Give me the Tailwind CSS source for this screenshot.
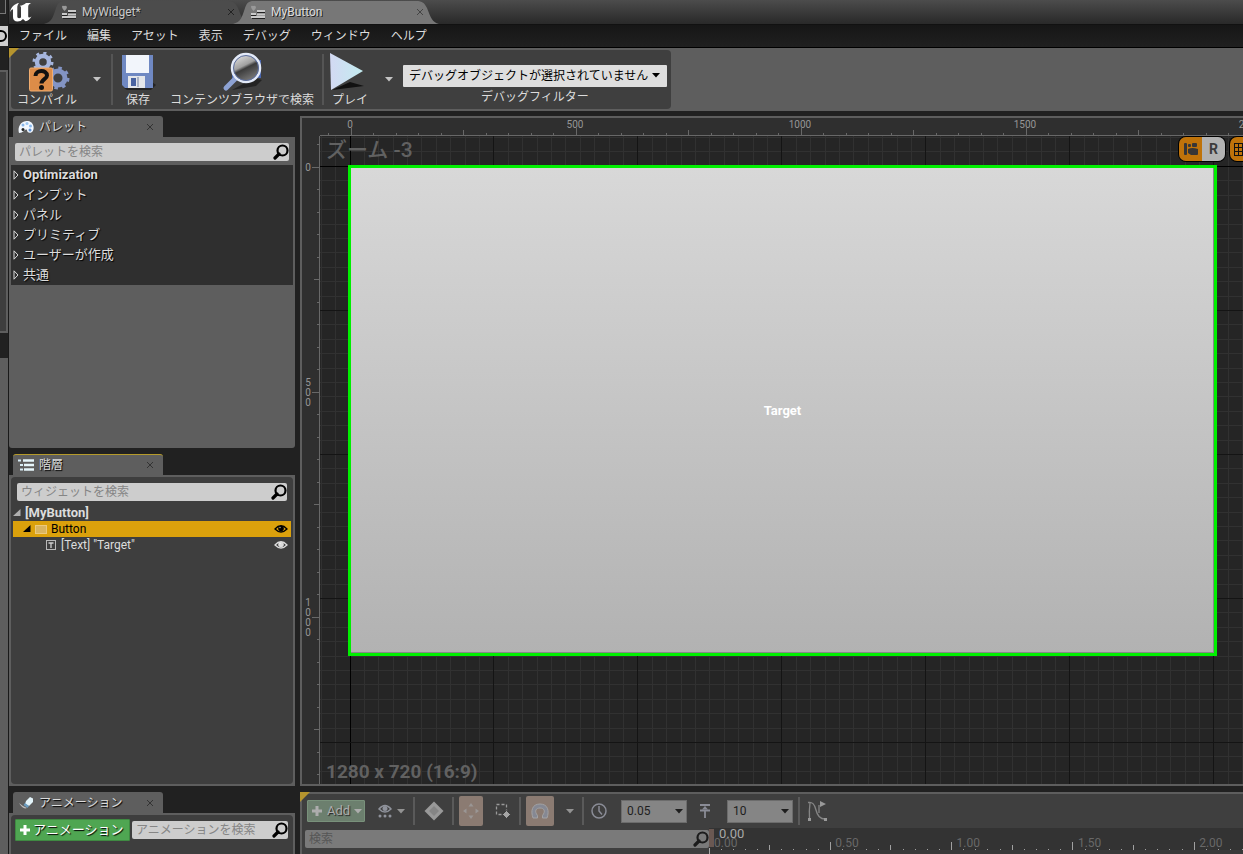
<!DOCTYPE html>
<html lang="ja">
<head>
    <meta charset="UTF-8">
    <meta name="viewport" content="width=device-width, initial-scale=1.0">
    <title>MyButton</title>
    <script src="https://cdn.jsdelivr.net/npm/@tailwindcss/browser@4"></script>
</head>
<body class="flex h-screen overflow-hidden bg-[#212121] font-['Roboto','Noto_Sans_CJK_JP',sans-serif] text-xs text-[#dcdcdc]">
    <svg class="hidden">
        <symbol id="search" viewBox="0 0 16 16">
            <circle cx="9.5" cy="6.5" r="5" fill="none" stroke="currentColor" stroke-width="2.2"/>
            <path d="M6 10 L2 14" stroke="currentColor" stroke-width="3.2" stroke-linecap="round"/>
        </symbol>
        <symbol id="close" viewBox="0 0 8 8">
            <path d="M1 1 L7 7 M7 1 L1 7" stroke="currentColor" stroke-width="1"/>
        </symbol>
        <symbol id="down" viewBox="0 0 8 5">
            <path d="M0 0 H8 L4 4.5 Z" fill="currentColor"/>
        </symbol>
        <symbol id="plus" viewBox="0 0 12 12">
            <path d="M4.5 1 h3 v3.5 h3.5 v3 h-3.5 v3.5 h-3 v-3.5 h-3.5 v-3 h3.5 Z" fill="currentColor"/>
        </symbol>
        <symbol id="eye" viewBox="0 0 14 10">
            <path d="M1 5 Q7 -1.5 13 5 Q7 11 1 5 Z" fill="none" stroke="currentColor" stroke-width="1.3"/>
            <circle cx="7" cy="4.5" r="2.8" fill="currentColor"/>
            <circle cx="6" cy="3.5" r=".8" fill="#fff" opacity=".6"/>
        </symbol>
        <symbol id="closed" viewBox="0 0 6 10">
            <path d="M1 .8 L5 5 L1 9.2 Z" fill="none" stroke="currentColor"/>
        </symbol>
        <symbol id="opened" viewBox="0 0 8 8">
            <path d="M7.5 0 V7 H0 Z" fill="currentColor"/>
        </symbol>
        <symbol id="widget" viewBox="0 0 16 14">
            <path d="M1 2 Q1 0 3 1 Q5 0 6 2 Q6 4 3.5 6 Q1.5 4.500 1 2 Z" fill="#999"/>
            <path d="M7 7.5 h8 M1 10.5 h5 M2 13.5 h13" stroke="#222"/>
            <path d="M7 6 h8 M1 9 h5 M7 9.500 h8 M1 12 h14" stroke="#c9c9c9" stroke-width="1.8"/>
        </symbol>
        <symbol id="tab" viewBox="0 0 206 24">
            <path d="M0 24 C8 22 9 17 12 8 C14 3 15 1 21 1 H183 C190 1 191 3 194 8 C198 18 199 22 206 24 Z" fill="currentColor"/>
        </symbol>
    </svg>

    <!-- Edge of the window behind -->
    <div class="flex w-[9px] shrink-0 flex-col border-r border-[#1a1a1a]">
        <div class="mb-3 h-[14px] w-1.5 border-r border-b border-[#777] bg-[#2a2a2a]"></div>
        <div class="h-5 overflow-hidden bg-[#cfcfcf]">
            <div class="mt-1 -ml-[5px] size-3 rounded-full border-2 border-black"></div>
        </div>
        <div class="mt-6 h-[263px] border-t-2 border-r-2 border-b-2 border-[#5e5e5e] bg-[#3e3e3e]"></div>
        <div class="mt-[25px] grow bg-[#5e5e5e]"></div>
    </div>

    <div class="flex min-w-0 grow flex-col">
        <!-- Title bar -->
        <header class="flex h-[25px] shrink-0 items-end border-b border-[#111] bg-linear-to-b from-[#4c4c4c] to-[#292929]">
            <div class="w-[35px] shrink-0 self-start">
                <svg class="h-[23px] w-6" viewBox="0 0 24 23">
                    <path d="M1 12 C2 7 6 3.5 10 3 C8.5 5 8.3 6 8.3 7.5 V16.5 C8.3 18 10 18.8 12 17.5 V7.5 C12 6.5 11.5 6 10.7 5.7 C13.5 5.6 15.5 4.5 17 3 H22 C19.8 4.3 19.2 5 19.2 7 V16 C19.2 17.8 20.3 18 22.5 16.5 C21 19.3 19 20.8 16.5 21.3 L14 19 C12.5 20.7 10.7 21.5 8.5 21.5 C5.7 21.5 4 19.8 4 17 V10 C4 8.3 2.5 9.3 1 12 Z" fill="#fff"/>
                </svg>
            </div>
            <div class="relative flex h-6 w-[206px] shrink-0 items-center pr-[15px] pl-[17px] text-[#4c4c4c]">
                <svg class="absolute inset-0 h-6 w-[206px]"><use href="#tab"/></svg>
                <svg class="relative h-[14px] w-4"><use href="#widget"/></svg>
                <span class="relative ml-[5px] grow text-[#c8c8c8] [text-shadow:1px_1px_0_#222]">MyWidget*</span>
                <button aria-label="閉じる" class="relative text-[#222]"><svg class="size-2"><use href="#close"/></svg></button>
            </div>
            <div class="relative -ml-[17px] flex h-6 w-[206px] shrink-0 items-center pr-[15px] pl-[17px] text-[#777]">
                <svg class="absolute inset-0 h-6 w-[206px]"><use href="#tab"/></svg>
                <svg class="relative h-[14px] w-4"><use href="#widget"/></svg>
                <span class="relative ml-[5px] grow text-[#dcdcdc] [text-shadow:1px_1px_0_#222]">MyButton</span>
                <button aria-label="閉じる" class="relative text-[#444]"><svg class="size-2"><use href="#close"/></svg></button>
            </div>
        </header>

        <!-- Menu -->
        <nav class="flex h-[23px] shrink-0 items-center gap-5 border-b border-black bg-linear-to-b from-[#161616] to-[#202020] px-2.5">
            <a href="#">ファイル</a>
            <a href="#">編集</a>
            <a href="#">アセット</a>
            <a href="#">表示</a>
            <a href="#">デバッグ</a>
            <a href="#">ウィンドウ</a>
            <a href="#">ヘルプ</a>
        </nav>

        <!-- Toolbar -->
        <div class="relative flex h-[63px] shrink-0 bg-[#5e5e5e] p-0.5">
            <svg class="absolute top-0 left-0 z-10 size-2.5" viewBox="0 0 10 10"><path d="M0 0 H10 L0 10 Z" fill="#b5942e"/></svg>
            <div class="flex items-stretch rounded-[4px] bg-[#3f3f3f] pr-1 text-center [text-shadow:1px_1px_1px_#000]">
                <button class="flex w-[72px] flex-col items-center">
                    <svg class="mt-0.5 h-10 w-12 shrink-0" viewBox="0 0 48 40">
                        <circle cx="20" cy="10" r="6" fill="none" stroke="#a5b5dd" stroke-width="4.5"/>
                        <circle cx="20" cy="10" r="9" fill="none" stroke="#a5b5dd" stroke-width="3" stroke-dasharray="3 4.07"/>
                        <circle cx="35" cy="26" r="7" fill="none" stroke="#8394c4" stroke-width="5"/>
                        <circle cx="35" cy="26" r="10" fill="none" stroke="#8394c4" stroke-width="3" stroke-dasharray="3.5 4.354"/>
                        <rect x="6.500" y="16" width="23" height="23" rx="1.5" fill="#dc8c48" stroke="#f0ad70"/>
                        <path d="M12.500 24 C12.500 17.5 24 17.5 24 23.5 C24 27 18.500 27.5 18.500 31.5" fill="none" stroke="#111" stroke-width="4"/>
                        <circle cx="18.5" cy="35.5" r="2.5" fill="#111"/>
                    </svg>
                    <span class="leading-4">コンパイル</span>
                </button>
                <button aria-label="コンパイルのオプション" class="w-7 pl-2.5 text-[#c4c4c4]"><svg class="h-[5px] w-2"><use href="#down"/></svg></button>
                <div class="my-1 mr-px w-0.5 bg-[#555]"></div>
                <button class="flex w-12 flex-col items-center">
                    <svg class="mt-0.5 h-10 w-12 shrink-0" viewBox="0 0 48 40">
                        <path d="M10 36 L38 30 L42 33 L37 38 H13 Z" fill="#111" opacity=".6"/>
                        <path d="M8 3 H39 V36 H11 L8 33 Z" fill="#6f88c2"/>
                        <rect x="12" y="3" width="23" height="18" fill="#f2f5fb"/>
                        <rect x="14" y="24" width="17" height="12" fill="#e4e6ea"/>
                        <rect x="17" y="26" width="5" height="8" fill="#4a63a0"/>
                        <path d="M23 25 h2 v10 h-2 Z" fill="#aab2c4"/>
                    </svg>
                    <span class="leading-4">保存</span>
                </button>
                <button class="flex w-40 flex-col items-center">
                    <svg class="mt-0.5 h-10 w-12 shrink-0" viewBox="0 0 48 40">
                        <defs>
                            <linearGradient id="lens" x1="0" y1="0" x2=".5" y2="1">
                                <stop offset="0" stop-color="#f4f4f4"/>
                                <stop offset=".5" stop-color="#a0a0a0"/>
                                <stop offset=".6" stop-color="#3c3c3c"/>
                                <stop offset="1" stop-color="#777"/>
                            </linearGradient>
                        </defs>
                        <path d="M14 38 L36 26 L44 28 L38 34 Z" fill="#111" opacity=".6"/>
                        <path d="M14 9 h6 v18 h-6 Z M39 8 h4 v18 h-4 Z" fill="#4965ad"/>
                        <path d="M18 26 L8 36" stroke="#8da2d3" stroke-width="5" stroke-linecap="round"/>
                        <circle cx="28" cy="16" r="14" fill="url(#lens)" stroke="#e3eaf8" stroke-width="2.5"/>
                        <circle cx="28" cy="16" r="12.5" fill="none" stroke="#5b6ea0"/>
                    </svg>
                    <span class="leading-4">コンテンツブラウザで検索</span>
                </button>
                <div class="my-1 mr-px w-0.5 bg-[#555]"></div>
                <button class="flex w-[50px] flex-col items-center">
                    <svg class="mt-0.5 h-10 w-12 shrink-0" viewBox="0 0 48 40">
                        <defs>
                            <linearGradient id="play" x1="0" y1="0" x2="1" y2="0">
                                <stop offset="0" stop-color="#d3d9f3"/>
                                <stop offset="1" stop-color="#c3ecf0"/>
                            </linearGradient>
                        </defs>
                        <path d="M6 38 L24 30 L38 34 Z" fill="#111"/>
                        <path d="M4 1 L37 19 L5 38 Z" fill="url(#play)"/>
                    </svg>
                    <span class="leading-4">プレイ</span>
                </button>
                <button aria-label="プレイのオプション" class="w-7 pl-2.5 text-[#c4c4c4]"><svg class="h-[5px] w-2"><use href="#down"/></svg></button>
                <div class="flex w-[264px] flex-col pt-[15px] [text-shadow:none]">
                    <div class="relative">
                        <select aria-label="デバッグフィルター" class="block h-[22px] w-full appearance-none rounded-[1px] bg-[#dedede] pl-1.5 text-black">
                            <option>デバッグオブジェクトが選択されていません</option>
                        </select>
                        <svg class="pointer-events-none absolute top-2 right-[7px] h-[5px] w-2 text-black"><use href="#down"/></svg>
                    </div>
                    <span class="leading-5">デバッグフィルター</span>
                </div>
            </div>
        </div>

        <div class="flex min-h-0 grow gap-[5px] pt-[5px]">
            <!-- Left column -->
            <div class="flex w-[286px] shrink-0 flex-col gap-1.5">
                <section class="flex min-h-0 flex-1 flex-col">
                    <div class="ml-1 flex h-[21px] w-[150px] shrink-0 items-center rounded-t-[3px] bg-[#5e5e5e] px-[5px]">
                        <svg class="h-[14px] w-4" viewBox="0 0 16 14">
                            <path d="M1 13 C-1 6 4 0 10 1 C16 2 17 9 14 12 C11 14 9 12 9 10 C7 8 6 13 1 13 Z" fill="#f2f8ff"/>
                            <circle cx="5" cy="5" r="1.5" fill="#8ab8ec"/><circle cx="9" cy="3.5" r="1.5" fill="#9cc6f2"/><circle cx="12.5" cy="6" r="1.5" fill="#8ab8ec"/><circle cx="12" cy="10" r="1.5" fill="#5f93d6"/><circle cx="5" cy="9.5" r="1.5" fill="#222"/>
                        </svg>
                        <h2 class="ml-[5px] grow [text-shadow:1px_1px_1px_#000]">パレット</h2>
                        <button aria-label="閉じる" class="mr-1 text-[#333]"><svg class="size-2"><use href="#close"/></svg></button>
                    </div>
                    <div class="grow rounded-b-[3px] bg-[#5e5e5e] px-0.5 pt-1.5">
                        <div class="relative mr-1 ml-1">
                            <input type="search" aria-label="パレットを検索" placeholder="パレットを検索" class="block h-[18px] w-full rounded-[2px] bg-[#cdcdcd] px-1 text-black placeholder:text-[#858585]">
                            <svg class="absolute top-px right-0 size-4 text-black"><use href="#search"/></svg>
                        </div>
                        <ul class="mt-1 bg-[#2f2f2f] text-[13px] leading-5 [text-shadow:1px_1px_1px_#000]">
                            <li class="flex items-center gap-1 pl-0.5"><svg class="h-2.5 w-1.5"><use href="#closed"/></svg><b>Optimization</b></li>
                            <li class="flex items-center gap-1 pl-0.5"><svg class="h-2.5 w-1.5"><use href="#closed"/></svg>インプット</li>
                            <li class="flex items-center gap-1 pl-0.5"><svg class="h-2.5 w-1.5"><use href="#closed"/></svg>パネル</li>
                            <li class="flex items-center gap-1 pl-0.5"><svg class="h-2.5 w-1.5"><use href="#closed"/></svg>プリミティブ</li>
                            <li class="flex items-center gap-1 pl-0.5"><svg class="h-2.5 w-1.5"><use href="#closed"/></svg>ユーザーが作成</li>
                            <li class="flex items-center gap-1 pl-0.5"><svg class="h-2.5 w-1.5"><use href="#closed"/></svg>共通</li>
                        </ul>
                    </div>
                </section>

                <section class="flex min-h-0 flex-1 flex-col">
                    <div class="ml-1 flex h-[21px] w-[150px] shrink-0 items-center rounded-t-[3px] border-t border-[#b59a2a] bg-[#5e5e5e] px-[5px]">
                        <svg class="h-3 w-4" viewBox="0 0 16 12">
                            <path d="M0 1.5 h3 M2 6 h3 M2 10.5 h3" stroke="#d7ecf5" stroke-width="2"/>
                            <path d="M5 1.5 h11 M6 6 h10 M6 10.5 h10" stroke="#e6f6fb" stroke-width="2.6"/>
                        </svg>
                        <h2 class="ml-[5px] grow [text-shadow:1px_1px_1px_#000]">階層</h2>
                        <button aria-label="閉じる" class="mr-1 text-[#333]"><svg class="size-2"><use href="#close"/></svg></button>
                    </div>
                    <div class="flex grow flex-col bg-[#5e5e5e] p-0.5">
                        <div class="grow rounded-[4px] bg-[#3e3e3e] px-0.5 pt-1.5">
                            <div class="relative mx-1">
                                <input type="search" aria-label="ウィジェットを検索" placeholder="ウィジェットを検索" class="block h-[18px] w-full rounded-[2px] bg-[#cdcdcd] px-1 text-black placeholder:text-[#858585]">
                                <svg class="absolute top-px right-0 size-4 text-black"><use href="#search"/></svg>
                            </div>
                            <ul class="mt-1 leading-4">
                                <li class="flex items-center gap-1"><svg class="size-2 text-[#b0b0b0]"><use href="#opened"/></svg><b class="text-[13px]">[MyButton]</b></li>
                                <li class="flex items-center gap-1 bg-[#dba10c] pr-[3px] pl-2.5 text-black">
                                    <svg class="size-2"><use href="#opened"/></svg>
                                    <svg class="h-[9px] w-3" viewBox="0 0 12 9"><rect x=".5" y=".5" width="11" height="8" fill="#d8b562" stroke="#ecca7c"/></svg>
                                    <span class="grow">Button</span>
                                    <svg class="h-2.5 w-[14px]"><use href="#eye"/></svg>
                                </li>
                                <li class="flex items-center gap-1 pr-[3px] pl-8">
                                    <svg class="size-3" viewBox="0 0 12 12"><rect x="1.5" y="1.5" width="9" height="9" fill="none" stroke="#b8b8b8"/><path d="M3.5 4 h5 M6 4 v5" stroke="#d0d0d0" stroke-width="1.3"/></svg>
                                    <span class="grow">[Text] "Target"</span>
                                    <svg class="h-2.5 w-[14px]"><use href="#eye"/></svg>
                                </li>
                            </ul>
                        </div>
                    </div>
                </section>

                <section class="flex h-[62px] shrink-0 flex-col">
                    <div class="ml-1 flex h-[21px] w-[150px] shrink-0 items-center rounded-t-[3px] bg-[#5e5e5e] px-[5px]">
                        <svg class="h-[14px] w-4" viewBox="0 0 16 14">
                            <path d="M8 5 L12 1 L15 2.5 V6 L11 10 L7 8 Z" fill="#e3f4fa"/>
                            <path d="M7 7 L11 10 L9.5 12 L5.5 9 Z" fill="#6a9cc0"/>
                            <path d="M1 7 L5 10 L9 12 Q5 14 1 7 Z" fill="#bbb"/>
                        </svg>
                        <h2 class="ml-[5px] grow [text-shadow:1px_1px_1px_#000]">アニメーション</h2>
                        <button aria-label="閉じる" class="mr-1 text-[#333]"><svg class="size-2"><use href="#close"/></svg></button>
                    </div>
                    <div class="flex grow bg-[#5e5e5e] px-0.5 pt-0.5">
                        <div class="flex grow items-start gap-0.5 rounded-t-[4px] bg-[#3e3e3e] pt-1 pr-[5px] pl-1">
                            <button class="flex h-[22px] w-[115px] shrink-0 items-center gap-0.5 rounded-[1px] border border-[#3f8a42] bg-[#4fa652] px-[3px] text-[13px] whitespace-nowrap text-white [text-shadow:1px_1px_1px_#000]"><svg class="size-3 shrink-0"><use href="#plus"/></svg>アニメーション</button>
                            <div class="relative mt-0.5 grow">
                                <input type="search" aria-label="アニメーションを検索" placeholder="アニメーションを検索" class="block h-[18px] w-full rounded-[2px] bg-[#cdcdcd] px-1 text-black placeholder:text-[#858585]">
                                <svg class="absolute top-px right-0 size-4 text-black"><use href="#search"/></svg>
                            </div>
                        </div>
                    </div>
                </section>
            </div>

            <!-- Right column -->
            <div class="flex min-w-0 grow flex-col gap-1.5">
                <!-- Designer -->
                <main class="relative grid min-h-0 grow grid-cols-[18px_1fr] grid-rows-[18px_1fr] overflow-hidden border-y-2 border-l-2 border-[#5e5e5e] bg-[#2f2f2f]">
                    <svg class="absolute -top-0.5 -left-0.5 z-10 size-2.5" viewBox="0 0 10 10"><path d="M0 0 H10 L8 2 H2 V8 L0 10 Z" fill="#b5942e"/></svg>
                    <svg id="rulerX" class="col-start-2 h-[18px] w-full" shape-rendering="crispEdges"></svg>
                    <svg id="rulerY" class="col-start-1 h-full w-[18px]" shape-rendering="crispEdges"></svg>
                    <div class="relative overflow-hidden bg-[#252525]">
                        <svg id="grid" class="absolute inset-0 h-full w-full" shape-rendering="crispEdges"></svg>
                        <div class="absolute top-[29px] left-7 flex h-[491px] w-[869px] items-center justify-center border-[3px] border-[#00f000] bg-linear-to-b from-[#d8d8d8] to-[#b2b2b2] text-[13px] font-bold text-white [box-shadow:inset_-1px_-1px_0_#888]">Target</div>
                        <div class="absolute top-0 left-1.5 text-[21px] leading-7 font-medium text-[#616161]">ズーム -3</div>
                        <div class="absolute bottom-0 left-1.5 text-[19px] leading-6 font-bold text-[#616161]">1280 x 720 (16:9)</div>
                        <div class="absolute top-px -right-[23px] flex gap-[5px]">
                            <div class="flex h-6 w-[46px] overflow-hidden rounded-[7px] ring-1 ring-black">
                                <button aria-label="アウトライン" class="flex w-[23px] items-center justify-center bg-[#bf730a]">
                                    <svg class="h-[14px] w-4" viewBox="0 0 16 14" fill="#363636"><rect x="1" y="1" width="3" height="12" rx="1"/><rect x="5" y="2" width="3" height="3" rx="1"/><rect x="9" y="1" width="5" height="4" rx="1"/><path d="M5 7 q4 -2 10 0 v5 q0 1 -1 1 h-6 l-3 -2 Z"/></svg>
                                </button>
                                <button class="grow bg-[#b2b2b2] text-sm font-bold text-[#3c3c3c]">R</button>
                            </div>
                            <button aria-label="グリッドスナップ" class="flex h-6 w-9 items-center rounded-[7px] bg-[#bf730a] pl-1 ring-1 ring-black">
                                <svg class="size-[13px]" viewBox="0 0 13 13"><path d="M.5 0 V13 M4.5 0 V13 M8.5 0 V13 M12.5 0 V13 M0 .5 H13 M0 4.5 H13 M0 8.5 H13 M0 12.5 H13" stroke="#111"/></svg>
                            </button>
                        </div>
                    </div>
                </main>

                <!-- Sequencer -->
                <section class="relative flex h-[62px] shrink-0 flex-col border-t-2 border-l-2 border-[#5e5e5e] bg-[#3f3f3f] text-[#939393]">
                    <svg class="absolute -top-0.5 -left-0.5 size-2.5" viewBox="0 0 10 10"><path d="M0 0 H10 L0 10 Z" fill="#b5942e"/></svg>
                    <div class="flex h-[34px] shrink-0 items-center pl-[5px]">
                        <button class="flex h-[22px] w-[58px] items-center gap-1 rounded-[1px] border border-[#79917b] bg-[#6c7f6e] px-[3px] text-[13px] text-[#adadad] [text-shadow:1px_1px_1px_#222]"><svg class="size-3 shrink-0"><use href="#plus"/></svg>Add<svg class="h-[5px] w-2 shrink-0"><use href="#down"/></svg></button>
                        <button aria-label="表示オプション" class="ml-3 flex items-center gap-1">
                            <svg class="h-[14px] w-4" viewBox="0 0 16 14"><path d="M2 5 Q8 -2 14 5 Q8 11 2 5 Z" fill="none" stroke="#8f929b" stroke-width="1.5"/><circle cx="8" cy="4.5" r="2.5" fill="#8f929b"/><g fill="#8f929b"><circle cx="3" cy="12" r="1.5"/><circle cx="8" cy="12" r="1.5"/><circle cx="13" cy="12" r="1.5"/></g></svg>
                            <svg class="h-[5px] w-2"><use href="#down"/></svg>
                        </button>
                        <div class="mr-[9px] ml-2 h-7 w-0.5 bg-[#5a5a5a]"></div>
                        <button aria-label="キー" class="size-5"><svg class="size-5" viewBox="0 0 20 20"><path d="M10 0.5 L19.5 10 L10 19.5 L.5 10 Z" fill="#999"/><path d="M10 5 L15 10 L10 15 L5 10 Z" fill="#858585"/></svg></button>
                        <div class="mr-[5px] ml-2 h-7 w-0.5 bg-[#5a5a5a]"></div>
                        <button aria-label="自動キー" class="flex h-[30px] w-6 items-center justify-center rounded-[2px] bg-[#8b7b72]"><svg class="size-4" viewBox="0 0 16 16" fill="#9a9694"><path d="M8 0 L10.5 3.5 H5.5 Z M8 16 L10.5 12.5 H5.5 Z M0 8 L3.5 5.5 V10.5 Z M16 8 L12.5 5.5 V10.5 Z"/></svg></button>
                        <button aria-label="トラックキー" class="ml-3"><svg class="block size-4" viewBox="0 0 16 16"><path d="M1.5 1.5 H11.5 V11.5 H1.5 Z" fill="none" stroke="#999" stroke-width="1.3" stroke-dasharray="3 2"/><path d="M11.5 7.5 L15.5 11.5 L11.5 15.5 L7.5 11.5 Z" fill="#a5a5a5" stroke="#3f3f3f"/></svg></button>
                        <div class="mr-[5px] ml-2 h-7 w-0.5 bg-[#5a5a5a]"></div>
                        <button aria-label="スナップ" class="flex h-[30px] w-7 items-center justify-center rounded-[2px] bg-[#8b7b72]"><svg class="size-5" viewBox="0 0 20 20"><path d="M3 17 C.5 10 2 3 10 3 C18 3 19.5 10 17 17 H12.5 V14.5 C16 10 14 7 10 7 C6 7 4 10 7.5 14.5 V17 Z" fill="#858893" stroke="#a2a2a4"/></svg></button>
                        <button aria-label="スナップのオプション" class="ml-3"><svg class="h-[5px] w-2"><use href="#down"/></svg></button>
                        <div class="mr-[7px] ml-2 h-7 w-0.5 bg-[#5a5a5a]"></div>
                        <svg class="size-4" viewBox="0 0 16 16"><circle cx="8" cy="8" r="7" fill="none" stroke="#8a8c96" stroke-width="1.5"/><path d="M8 3 V8 L11 11.5" fill="none" stroke="#8a8c96" stroke-width="1.5"/></svg>
                        <div class="relative ml-3.5">
                            <select aria-label="時間間隔" class="block h-[23px] w-[66px] appearance-none border border-[#6c6c6c] bg-[#858585] pl-[5px] text-xs text-[#1e1e1e]"><option>0.05</option></select>
                            <svg class="pointer-events-none absolute top-[9px] right-1 h-[5px] w-2 text-[#1e1e1e]"><use href="#down"/></svg>
                        </div>
                        <svg class="ml-2.5 h-4 w-4" viewBox="0 0 16 16"><path d="M3 2 H13 M3 7.5 H13 M8 7 V15" stroke="#8a8c96" stroke-width="1.8"/><path d="M8 3 L11 6.5 H5 Z" fill="#8a8c96"/></svg>
                        <div class="relative ml-3.5">
                            <select aria-label="値の間隔" class="block h-[23px] w-[66px] appearance-none border border-[#6c6c6c] bg-[#858585] pl-[5px] text-xs text-[#1e1e1e]"><option>10</option></select>
                            <svg class="pointer-events-none absolute top-[9px] right-1 h-[5px] w-2 text-[#1e1e1e]"><use href="#down"/></svg>
                        </div>
                        <div class="mr-[7px] ml-[5px] h-7 w-0.5 bg-[#5a5a5a]"></div>
                        <button aria-label="カーブエディタ"><svg class="block h-5 w-5" viewBox="0 0 20 20"><path d="M1 1.5 Q7 0 9 9 Q11 18 18 18 M2.5 18 Q2 9 3 2 M12 4 V12" fill="none" stroke="#858585" stroke-width="1.3"/><path d="M13 0 L19 3 L13 6 Z M1 17 h3 v3 h-3 Z M17 17 h3 v3 h-3 Z" fill="#999"/></svg></button>
                    </div>
                    <div class="flex grow">
                        <div class="relative w-[407px] shrink-0 pt-0.5 pl-[3px]">
                            <input type="search" aria-label="検索" placeholder="検索" class="block h-[18px] w-full rounded-[2px] bg-[#7a7a7a] px-1 text-black placeholder:text-[#565656]">
                            <svg class="absolute top-[3px] right-0 size-4 text-[#1c1c1c]"><use href="#search"/></svg>
                        </div>
                        <div class="relative min-w-0 grow overflow-hidden">
                            <svg id="timeline" class="absolute inset-0 h-full w-full" shape-rendering="crispEdges"></svg>
                        </div>
                    </div>
                </section>
            </div>
        </div>
    </div>

    <script>
        const NS = 'http://www.w3.org/2000/svg';

        function line(svg, x, y, w, h, fill) {
            const r = document.createElementNS(NS, 'rect');
            r.setAttribute('x', Math.floor(x));
            r.setAttribute('y', Math.floor(y));
            r.setAttribute('width', w);
            r.setAttribute('height', h);
            r.setAttribute('fill', fill);
            svg.appendChild(r);
        }

        function label(svg, x, y, text, size, fill, anchor) {
            const t = document.createElementNS(NS, 'text');
            t.setAttribute('x', x);
            t.setAttribute('y', y);
            t.setAttribute('font-size', size);
            t.setAttribute('fill', fill);
            t.setAttribute('text-anchor', anchor);
            t.textContent = text;
            svg.appendChild(t);
        }

        // Designer grid, ten cells per major line
        const grid = document.getElementById('grid');
        for (const major of [false, true]) {
            for (let i = -2; i < 200; i++) {
                if ((i % 10 === 0) !== major) continue;
                const color = i === 0 ? '#000' : major ? '#141414' : '#313131';
                line(grid, i === 0 ? 30 : 29.95 + i * 14.4, 0, 1, 4000, color);
                line(grid, 0, 30.4 + i * 14.4, 4000, 1, color);
            }
        }

        // Rulers, a tick every 50 units
        const rulerX = document.getElementById('rulerX');
        const rulerY = document.getElementById('rulerY');
        line(rulerX, 0, 17, 4000, 1, '#686868');
        line(rulerY, 17, 0, 1, 4000, '#686868');
        for (let i = -1; i < 100; i++) {
            const len = i % 10 === 0 ? 7 : i % 5 === 0 ? 5 : 2;
            line(rulerX, 31 + i * 22.5, 17 - len, 1, len, '#686868');
            line(rulerY, 17 - len, 31 + i * 22.5, len, 1, '#686868');
        }
        for (const unit of [0, 500, 1000, 1500, 2000]) {
            label(rulerX, 30 + unit * 0.45, 10, unit, 10, '#969696', 'middle');
        }
        for (const unit of [0, 500, 1000]) {
            const digits = String(unit).split('');
            digits.forEach((d, n) => label(rulerY, 6, 35 + unit * 0.45 - (digits.length - 1) * 5 + n * 10, d, 10, '#969696', 'middle'));
        }

        // Timeline, a tick every 0.05s
        const timeline = document.getElementById('timeline');
        line(timeline, 0, 0, 4000, 22, '#333');
        line(timeline, 0, 22, 4000, 40, '#3a3a3a');
        line(timeline, 0, 1, 5, 18, '#6a5852');
        line(timeline, 0, 20, 1, 20, '#aaa');
        for (let i = 1; i < 150; i++) {
            const len = i % 10 === 0 ? 8 : i % 5 === 0 ? 5 : 1;
            line(timeline, i * 12.13, 22 - len, 1, len, '#a0a0a0');
        }
        for (const sec of [0, 0.5, 1, 1.5, 2]) {
            label(timeline, 5 + sec * 242.6, 19, sec.toFixed(2), 12, '#686868', 'start');
        }
        label(timeline, 10, 10, '0.00', 13, '#a8a8a8', 'start');
    </script>
</body>
</html>
